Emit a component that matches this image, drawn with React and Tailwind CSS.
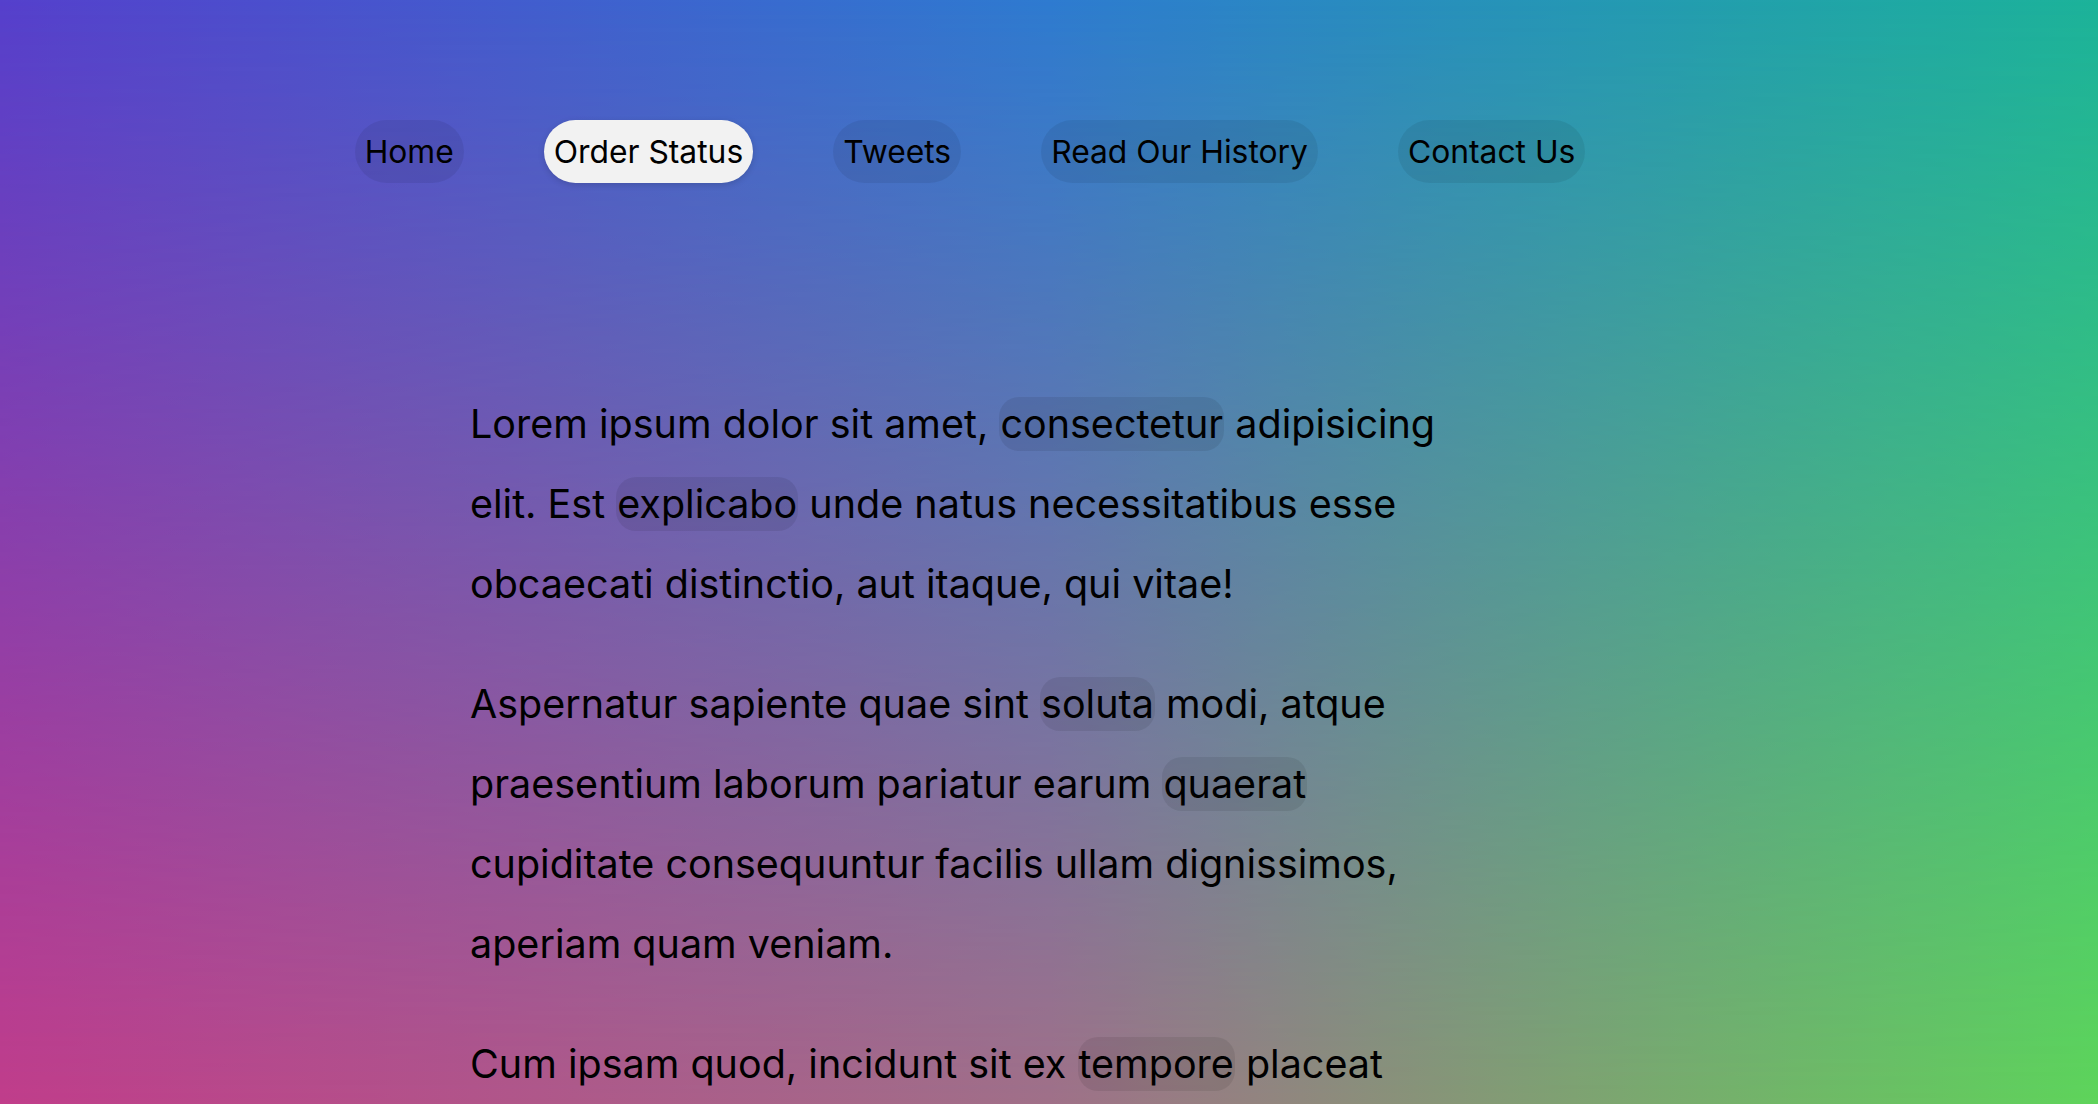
import React from 'react';

const NAV = ['Home', 'Order Status', 'Tweets', 'Read Our History', 'Contact Us'];

function Mark({ children }) {
  return <span className="rounded-[20px] bg-black/[0.08] px-[1px] py-[3px]">{children}</span>;
}

export default function App() {
  return (
    <div
      className="relative h-screen overflow-hidden bg-[linear-gradient(to_right,#5540cc,#2e7bd0_50%,#1cb39a)] text-black"
      style={{ fontFamily: 'Inter, "Liberation Sans", sans-serif' }}
    >
      {/* lower colour band, faded in top to bottom */}
      <div className="absolute inset-0 bg-[linear-gradient(to_right,#c13d8a,#a07088_50%,#5ed45a)] [mask-image:linear-gradient(to_bottom,transparent,black)]" />

      <div className="relative flex flex-col items-center pr-[158px]">
        <nav className="flex items-center gap-[80px] pt-[120px]">
          {NAV.map((item) => (
            <a
              key={item}
              href="#"
              className={
                item === 'Order Status'
                  ? 'flex h-[63px] items-center rounded-full bg-[#f2f2f2] px-[10px] text-[31.8px] shadow-[0_2px_6px_rgba(0,0,0,0.15)]'
                  : 'flex h-[63px] items-center rounded-full bg-black/[0.07] px-[10px] text-[31.8px]'
              }
            >
              {item}
            </a>
          ))}
        </nav>

        <main className="mt-[201px] w-[1000px] text-[39.5px] leading-[80px]">
          <p className="mb-[40px]">
            Lorem ipsum dolor sit amet, <Mark>consectetur</Mark> adipisicing elit. Est <Mark>explicabo</Mark> unde natus
            necessitatibus esse obcaecati distinctio, aut itaque, qui vitae!
          </p>
          <p className="mb-[40px]">
            Aspernatur sapiente quae sint <Mark>soluta</Mark> modi, atque praesentium laborum pariatur earum{' '}
            <Mark>quaerat</Mark> cupiditate consequuntur facilis ullam dignissimos, aperiam quam veniam.
          </p>
          <p className="mb-[40px]">
            Cum ipsam quod, incidunt sit ex <Mark>tempore</Mark> placeat voluptatibus dolorum, repellendus nihil
            mollitia eveniet quibusdam.
          </p>
        </main>
      </div>
    </div>
  );
}
